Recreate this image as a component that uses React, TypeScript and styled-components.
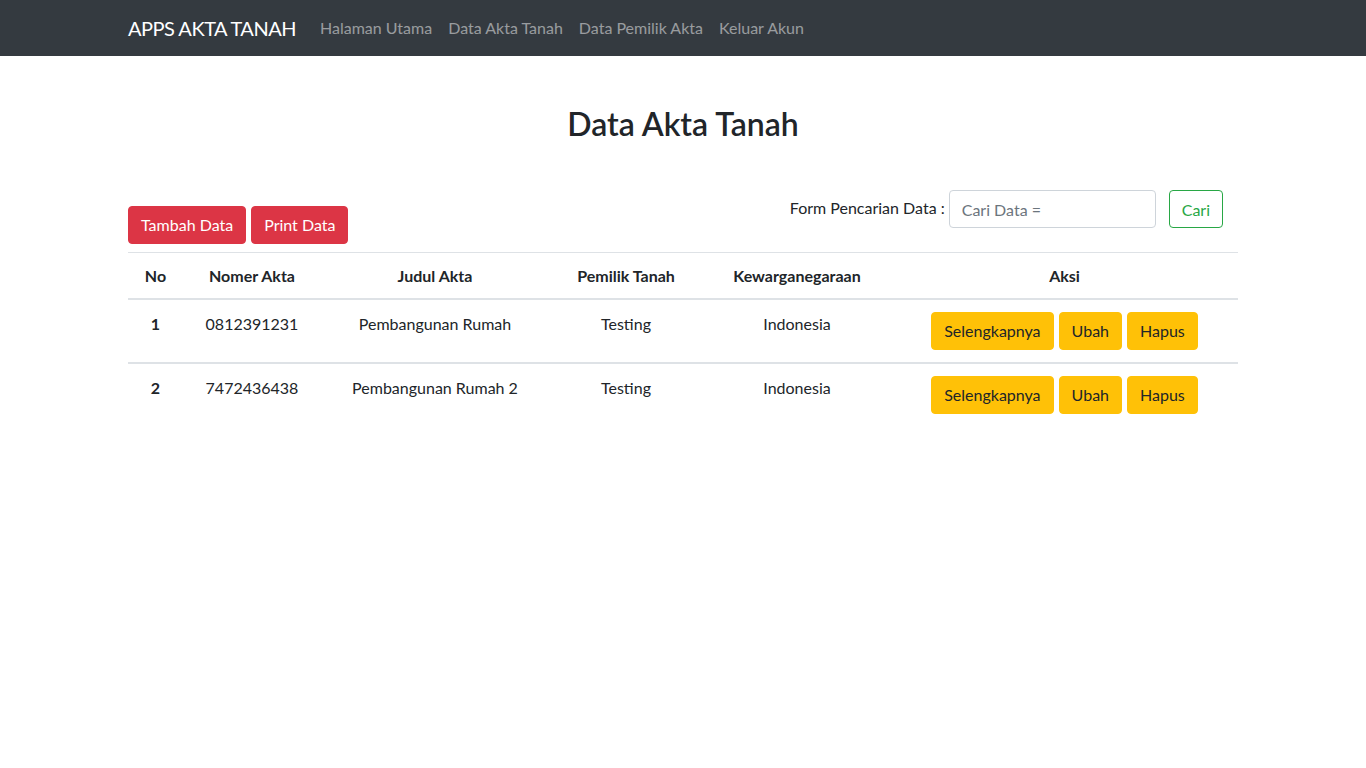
import React from 'react';
import styled, { createGlobalStyle } from 'styled-components';

const GlobalStyle = createGlobalStyle`
  body {
    margin: 0;
    font-family: Lato, "Open Sans", "Liberation Sans", sans-serif;
    font-size: 16px;
    line-height: 1.5;
    color: #212529;
    background: #fff;
  }
  * { box-sizing: border-box; }
`;

const rows = [
  { no: 1, nomer: '0812391231', judul: 'Pembangunan Rumah', pemilik: 'Testing', warga: 'Indonesia' },
  { no: 2, nomer: '7472436438', judul: 'Pembangunan Rumah 2', pemilik: 'Testing', warga: 'Indonesia' },
];

const menu = ['Halaman Utama', 'Data Akta Tanah', 'Data Pemilik Akta', 'Keluar Akun'];

const App = () => {
  return (
    <>
      <GlobalStyle />
      <NavBar>
        <NavInner>
          <Brand href="#">APPS AKTA TANAH</Brand>
          <NavList>
            {menu.map((item) => (
              <NavLink key={item} href="#">{item}</NavLink>
            ))}
          </NavList>
        </NavInner>
      </NavBar>

      <Container>
        <Title>Data Akta Tanah</Title>

        <Toolbar>
          <ButtonGroup>
            <Button variant="danger">Tambah Data</Button>
            <Button variant="danger">Print Data</Button>
          </ButtonGroup>
          <SearchForm onSubmit={(e) => e.preventDefault()}>
            <SearchLabel>Form Pencarian Data :</SearchLabel>
            <SearchInput placeholder="Cari Data =" />
            <OutlineButton type="submit">Cari</OutlineButton>
          </SearchForm>
        </Toolbar>

        <Table>
          <colgroup>
            <col style={{ width: 55 }} />
            <col style={{ width: 138 }} />
            <col style={{ width: 228 }} />
            <col style={{ width: 154 }} />
            <col style={{ width: 188 }} />
            <col style={{ width: 347 }} />
          </colgroup>
          <thead>
            <tr>
              <Th>No</Th>
              <Th>Nomer Akta</Th>
              <Th>Judul Akta</Th>
              <Th>Pemilik Tanah</Th>
              <Th>Kewarganegaraan</Th>
              <Th>Aksi</Th>
            </tr>
          </thead>
          <tbody>
            {rows.map((r) => (
              <Row key={r.no}>
                <Td bold>{r.no}</Td>
                <Td>{r.nomer}</Td>
                <Td>{r.judul}</Td>
                <Td>{r.pemilik}</Td>
                <Td>{r.warga}</Td>
                <Td>
                  <ActionGroup>
                    <Button variant="warning">Selengkapnya</Button>
                    <Button variant="warning">Ubah</Button>
                    <Button variant="warning">Hapus</Button>
                  </ActionGroup>
                </Td>
              </Row>
            ))}
          </tbody>
        </Table>
      </Container>
    </>
  );
};

export default App;

const NavBar = styled.nav`
  background: #343a40;
  height: 56px;
  display: flex;
  align-items: center;
`;

const NavInner = styled.div`
  width: 100%;
  max-width: 1140px;
  margin: 0 auto;
  padding: 0 15px;
  display: flex;
  align-items: center;
`;

const Brand = styled.a`
  color: #fff;
  font-size: 20px;
  line-height: 30px;
  letter-spacing: -0.5px;
  padding: 5px 0;
  margin-right: 16px;
  text-decoration: none;
  white-space: nowrap;
`;

const NavList = styled.div`
  display: flex;
  align-items: center;
`;

const NavLink = styled.a`
  color: rgba(255, 255, 255, 0.5);
  padding: 8px;
  text-decoration: none;
  white-space: nowrap;
`;

const Container = styled.main`
  max-width: 1140px;
  margin: 0 auto;
  padding: 0 15px;
`;

const Title = styled.h2`
  margin: 49px 0 0;
  text-align: center;
  font-size: 32px;
  font-weight: 600;
  line-height: 1.2;
`;

const Toolbar = styled.div`
  margin-top: 47px;
  margin-bottom: 8px;
  display: flex;
  justify-content: space-between;
  align-items: flex-end;
`;

const ButtonGroup = styled.div`
  display: flex;
  gap: 5px;
`;

const ActionGroup = styled.div`
  display: flex;
  justify-content: center;
  gap: 5px;
`;

const Button = styled.button<{ variant: 'danger' | 'warning' }>`
  font-family: inherit;
  font-size: 16px;
  line-height: 24px;
  padding: 6px 12px;
  border-radius: 4px;
  border: 1px solid ${(p) => (p.variant === 'danger' ? '#dc3545' : '#ffc107')};
  background: ${(p) => (p.variant === 'danger' ? '#dc3545' : '#ffc107')};
  color: ${(p) => (p.variant === 'danger' ? '#fff' : '#212529')};
  cursor: pointer;
  white-space: nowrap;
`;

const SearchForm = styled.form`
  display: flex;
  align-items: center;
  margin-bottom: 16px;
  padding-right: 15px;
`;

const SearchLabel = styled.label`
  margin-right: 4px;
  white-space: nowrap;
  position: relative;
  top: -1px;
`;

const SearchInput = styled.input`
  width: 207px;
  height: 38px;
  padding: 6px 12px;
  font-family: inherit;
  font-size: 16px;
  color: #495057;
  border: 1px solid #ced4da;
  border-radius: 4px;
  margin-right: 13px;
  &::placeholder {
    color: #6c757d;
  }
`;

const OutlineButton = styled.button`
  height: 38px;
  font-family: inherit;
  font-size: 16px;
  padding: 6px 12px;
  border: 1px solid #28a745;
  color: #28a745;
  background: transparent;
  border-radius: 4px;
  cursor: pointer;
`;

const Table = styled.table`
  width: 100%;
  table-layout: fixed;
  border-collapse: separate;
  border-spacing: 0;
  text-align: center;
`;

const Th = styled.th`
  padding: 11px 12px 10px;
  font-weight: 700;
  border-top: 1px solid #dee2e6;
  border-bottom: 2px solid #dee2e6;
  vertical-align: bottom;
  white-space: nowrap;
`;

const Row = styled.tr`
  & + & > td {
    border-top: 2px solid #dee2e6;
  }
`;

const Td = styled.td<{ bold?: boolean }>`
  padding: 12px;
  vertical-align: top;
  font-weight: ${(p) => (p.bold ? 700 : 400)};
  white-space: nowrap;
`;
